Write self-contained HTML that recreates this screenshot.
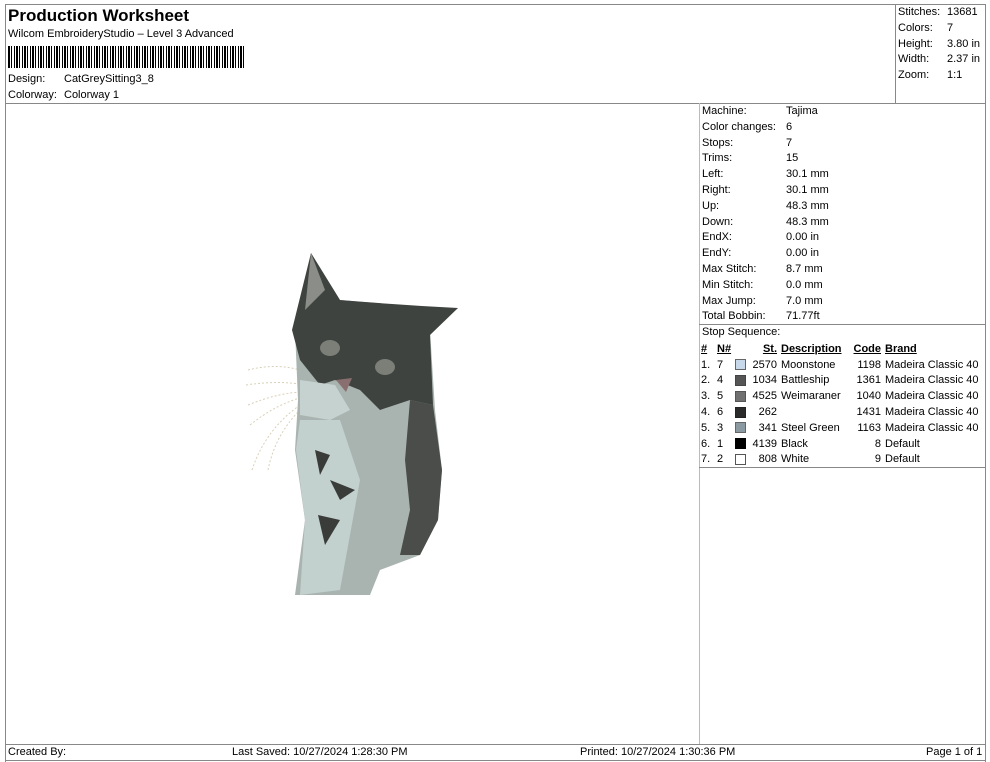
<!DOCTYPE html>
<html><head><meta charset="utf-8"><style>
body{margin:0;width:990px;height:762px;background:#fff;font-family:"Liberation Sans",sans-serif;color:#000;position:relative;overflow:hidden}
.a{position:absolute;white-space:nowrap}
.l{position:absolute;background:#888}
.s{font-size:11px}
.r td{padding:0;height:15.8px;font-size:11px}
</style></head><body>
<div class="l" style="left:5px;top:4px;width:981px;height:1px"></div>
<div class="l" style="left:5px;top:4px;width:1px;height:758px"></div>
<div class="l" style="left:985px;top:4px;width:1px;height:758px"></div>
<div class="l" style="left:5px;top:103px;width:981px;height:1px"></div>
<div class="l" style="left:895px;top:4px;width:1px;height:99px"></div>
<div class="l" style="left:699px;top:103px;width:1px;height:641px;background:#bbb"></div>
<div class="l" style="left:699px;top:324px;width:287px;height:1px"></div>
<div class="l" style="left:699px;top:467px;width:287px;height:1px"></div>
<div class="l" style="left:5px;top:744px;width:981px;height:1px"></div>
<div class="l" style="left:5px;top:760px;width:981px;height:1px"></div>

<div class="a" style="left:8px;top:6px;font-size:17px;font-weight:bold">Production Worksheet</div>
<div class="a s" style="left:8px;top:28px">Wilcom EmbroideryStudio – Level 3 Advanced</div>
<div class="a" style="left:8px;top:46px;width:236px;height:22px;background:repeating-linear-gradient(90deg,#000 0 2px,#fff 2px 3px,#000 3px 4px,#fff 4px 6px,#000 6px 7px,#fff 7px 8px)"></div>
<div class="a s" style="left:8px;top:73px">Design:</div><div class="a s" style="left:64px;top:73px">CatGreySitting3_8</div>
<div class="a s" style="left:8px;top:89px">Colorway:</div><div class="a s" style="left:64px;top:89px">Colorway 1</div>

<div class="a s" style="left:898px;top:5px;line-height:15.8px">Stitches:<br>Colors:<br>Height:<br>Width:<br>Zoom:</div>
<div class="a s" style="left:947px;top:5px;line-height:15.8px">13681<br>7<br>3.80 in<br>2.37 in<br>1:1</div>

<div class="a s" style="left:702px;top:104px;line-height:15.8px">Machine:<br>Color changes:<br>Stops:<br>Trims:<br>Left:<br>Right:<br>Up:<br>Down:<br>EndX:<br>EndY:<br>Max Stitch:<br>Min Stitch:<br>Max Jump:<br>Total Bobbin:<br>Stop Sequence:</div>
<div class="a s" style="left:786px;top:104px;line-height:15.8px">Tajima<br>6<br>7<br>15<br>30.1 mm<br>30.1 mm<br>48.3 mm<br>48.3 mm<br>0.00 in<br>0.00 in<br>8.7 mm<br>0.0 mm<br>7.0 mm<br>71.77ft</div>

<table class="a r" style="left:701px;top:341px;border-collapse:collapse">
<tr style="font-weight:bold;text-decoration:underline"><td style="width:16px">#</td><td style="width:18px">N#</td><td style="width:12px"></td><td style="width:30px;text-align:right">St.</td><td style="width:70px;padding-left:4px">Description</td><td style="width:30px;text-align:right">Code</td><td style="padding-left:4px">Brand</td></tr>
<tr><td>1.</td><td>7</td><td><div style="width:9px;height:9px;background:#c6d8ea;border:1px solid #666"></div></td><td align="right">2570</td><td style="padding-left:4px">Moonstone</td><td align="right">1198</td><td style="padding-left:4px">Madeira Classic 40</td></tr>
<tr><td>2.</td><td>4</td><td><div style="width:9px;height:9px;background:#555;border:1px solid #444"></div></td><td align="right">1034</td><td style="padding-left:4px">Battleship</td><td align="right">1361</td><td style="padding-left:4px">Madeira Classic 40</td></tr>
<tr><td>3.</td><td>5</td><td><div style="width:9px;height:9px;background:#707070;border:1px solid #555"></div></td><td align="right">4525</td><td style="padding-left:4px">Weimaraner</td><td align="right">1040</td><td style="padding-left:4px">Madeira Classic 40</td></tr>
<tr><td>4.</td><td>6</td><td><div style="width:9px;height:9px;background:#2a2a2a;border:1px solid #222"></div></td><td align="right">262</td><td style="padding-left:4px"></td><td align="right">1431</td><td style="padding-left:4px">Madeira Classic 40</td></tr>
<tr><td>5.</td><td>3</td><td><div style="width:9px;height:9px;background:#8a9aa0;border:1px solid #666"></div></td><td align="right">341</td><td style="padding-left:4px">Steel Green</td><td align="right">1163</td><td style="padding-left:4px">Madeira Classic 40</td></tr>
<tr><td>6.</td><td>1</td><td><div style="width:9px;height:9px;background:#000;border:1px solid #000"></div></td><td align="right">4139</td><td style="padding-left:4px">Black</td><td align="right">8</td><td style="padding-left:4px">Default</td></tr>
<tr><td>7.</td><td>2</td><td><div style="width:9px;height:9px;background:#fff;border:1px solid #555"></div></td><td align="right">808</td><td style="padding-left:4px">White</td><td align="right">9</td><td style="padding-left:4px">Default</td></tr>
</table>

<svg class="a" style="left:0;top:0" width="990" height="762">
<g fill="none" stroke="#d8d0b8" stroke-width="1" stroke-dasharray="2 2">
<path d="M248 370 Q280 362 305 372"/><path d="M246 385 Q280 380 305 385"/><path d="M248 405 Q280 392 305 392"/><path d="M250 425 Q275 405 300 398"/><path d="M252 470 Q265 430 300 405"/><path d="M268 470 Q275 435 300 410"/>
</g>
<path d="M311 253 L340 300 Q400 305 455 310 L430 330 L435 410 L442 470 L438 520 L420 555 L380 570 L370 595 L295 595 L305 520 L295 450 L298 400 L295 330 Z" fill="#a9b4b0"/>
<path d="M311 253 L340 300 Q400 305 458 308 L430 335 L433 405 L410 400 L380 410 L360 390 L335 380 L320 385 L300 360 L292 330 Z" fill="#3f433f"/>
<path d="M311 253 L325 290 L305 310 Z" fill="#8a8d88"/>
<path d="M410 400 L433 405 L442 470 L438 520 L420 555 L400 555 L410 510 L405 460 Z" fill="#4a4d4a"/>
<path d="M300 380 L335 385 L350 410 L330 420 L300 415 Z" fill="#c5d2d0"/>
<path d="M300 420 L340 420 L360 480 L340 590 L300 595 L305 520 L296 450 Z" fill="#c2d0ce"/>
<path d="M315 450 L330 455 L320 475 Z M318 515 L340 520 L325 545 Z M330 480 L355 490 L340 500 Z" fill="#3a3c3a"/>
<ellipse cx="330" cy="348" rx="10" ry="8" fill="#7b7f78"/><ellipse cx="385" cy="367" rx="10" ry="8" fill="#7b7f78"/>
<path d="M336 380 L352 378 L346 392 Z" fill="#8a6f70"/>
</svg>

<div class="a s" style="left:8px;top:746px">Created By:</div>
<div class="a s" style="left:232px;top:746px">Last Saved: 10/27/2024 1:28:30 PM</div>
<div class="a s" style="left:580px;top:746px">Printed: 10/27/2024 1:30:36 PM</div>
<div class="a s" style="left:926px;top:746px">Page 1 of 1</div>
</body></html>
